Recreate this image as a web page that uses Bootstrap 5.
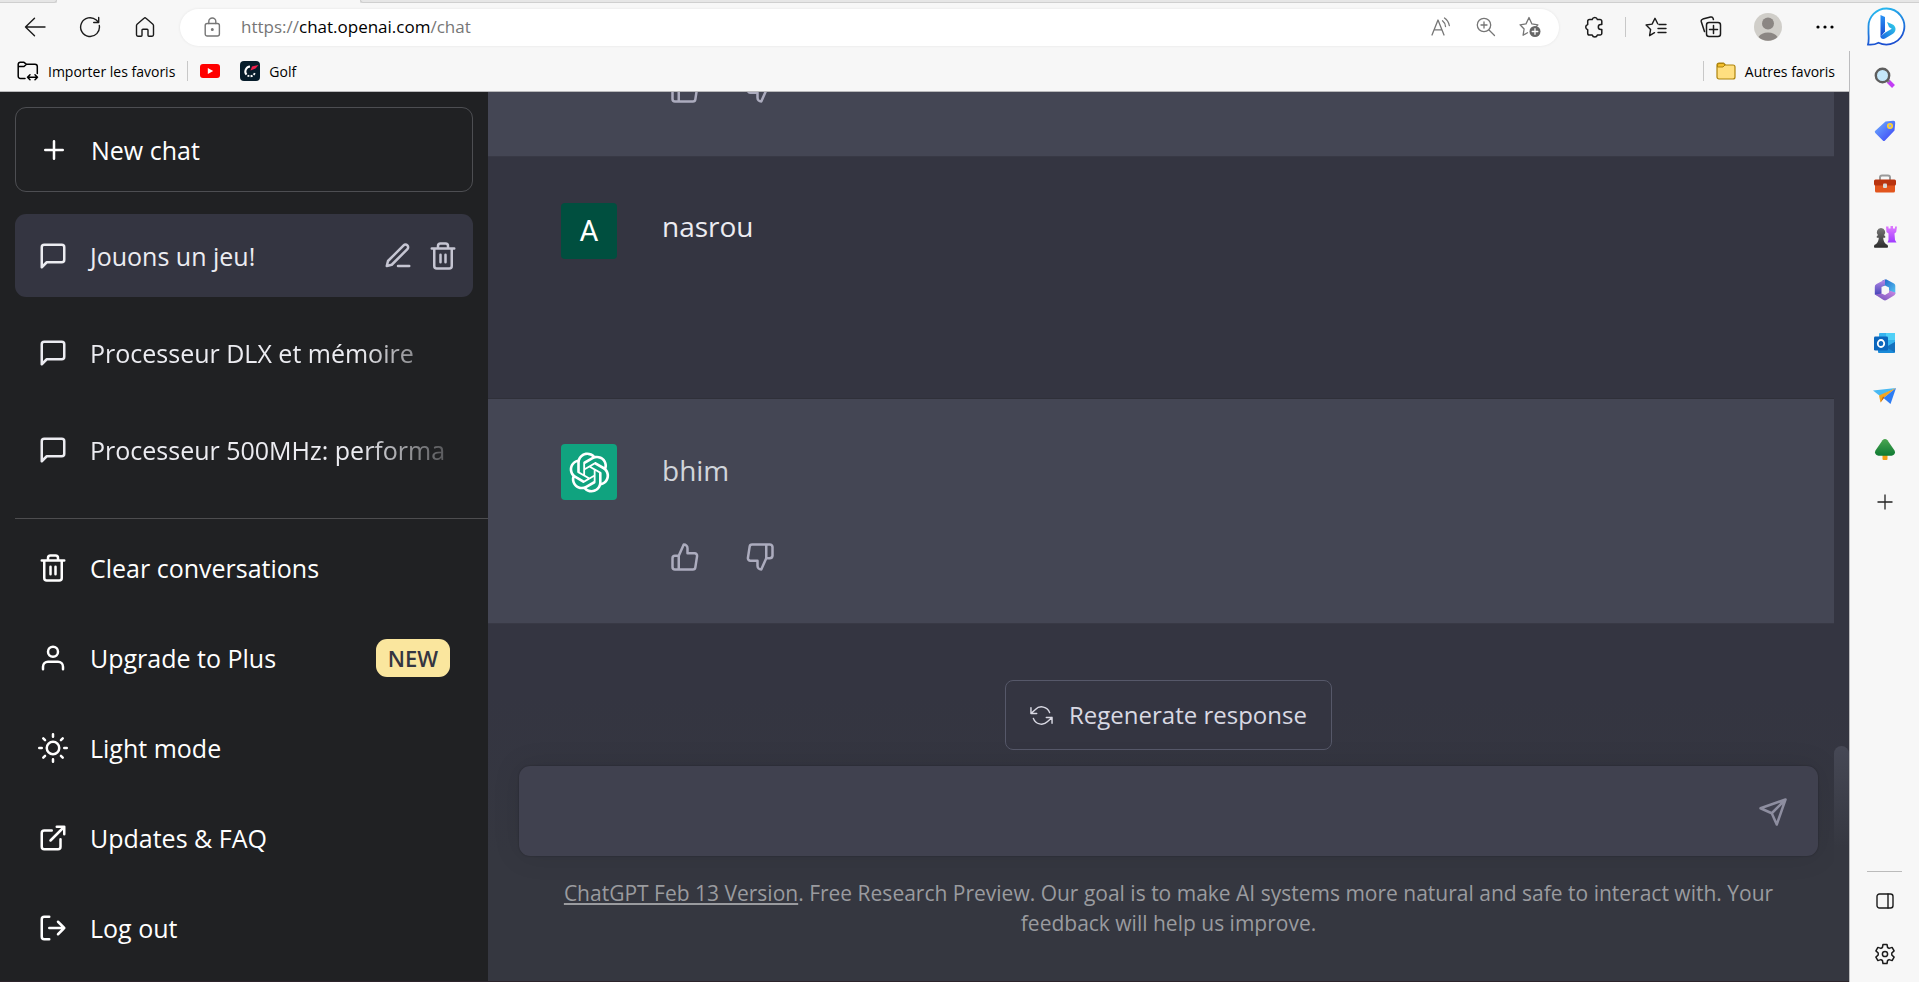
<!DOCTYPE html>
<html lang="fr">
<head>
<meta charset="utf-8">
<meta name="viewport" content="width=device-width, initial-scale=1">
<title>Jouons un jeu!</title>
<link href="https://cdn.jsdelivr.net/npm/bootstrap@5.3.0/dist/css/bootstrap.min.css" rel="stylesheet">
<style>
  body { font-family: "Open Sans", "Noto Sans", sans-serif; background: #f7f7f7; color: #1b1b1b; }
  svg { display: block; flex: none; }
  button { color: inherit; }
  .ico { fill: none; stroke: currentColor; stroke-linecap: round; stroke-linejoin: round; }
  .plain { background: none; border: 0; padding: 0; display: flex; align-items: center; justify-content: center; }

  /* browser frame */
  .tab-strip { height: 3px; background: #e6e6e6; }
  .tab-gap { width: 57px; border-bottom: 1px solid #cfcfcf; border-right: 1px solid #cfcfcf; border-bottom-right-radius: 3px; }
  .tab-open { width: 303px; background: #f7f7f7; }
  .tab-rest { border-bottom: 1px solid #cfcfcf; border-left: 1px solid #cfcfcf; border-bottom-left-radius: 3px; }
  .toolbar { height: 48px; padding-left: 7px; }
  .tool { width: 55px; height: 40px; }
  .tool-wide { width: 59px; height: 40px; }
  .tool-bing { width: 67px; height: 44px; }
  .address { height: 37px; border-radius: 19px; background: #fff; margin: 0 7px 0 8px; padding: 0 6px 0 24px; color: #767676; font-size: 17px; box-shadow: 0 0 3px rgba(0,0,0,.08); }
  .address b { font-weight: 400; color: #000; }
  .address .lock { margin-right: 20px; }
  .address .tool { width: 45px; }
  .v-line { width: 1px; height: 20px; background: #c8c8c8; }
  .tool-line { margin: 0 2px 0 4px; }
  .fav-bar { height: 41px; padding: 0 14px 0 17px; border-bottom: 1px solid #b9b9bb; font-size: 14px; }
  .fav-bar a { color: #000; text-decoration: none; display: flex; align-items: center; gap: 9px; }
  .fav-line { margin: 0 12px; }
  .side-rail { width: 70px; border-left: 1px solid #bcbcbe; padding-bottom: 2px; }
  .side-rail button { width: 100%; height: 53px; }
  .rail-line { width: 35px; height: 1px; background: #bbb; margin: 0 auto 2px; }

  /* conversation list */
  .app-view { border-bottom: 1px solid #2c242b; }
  .history { width: 488px; background: #202123; padding: 15px 0 12px 15px; color: #fff; font-size: 25px; line-height: 36px; }
  .history a, .new-chat { display: flex; align-items: center; gap: 22px; padding: 0 15px 0 23px; color: #fff; text-decoration: none; white-space: nowrap; }
  .new-chat { background: none; height: 85px; border: 1px solid #4d4e52; border-radius: 11px; margin: 0 15px 22px 0; }
  .talks { gap: 14px; margin-right: 15px; }
  .talks .talk { height: 83px; border-radius: 11px; }
  .talks a { height: 83px; color: #ececf1; }
  .talk-on { background: #343541; }
  .talk-acts { gap: 15px; padding-right: 15px; color: #c5c5d2; }
  .fade-out { -webkit-mask-image: linear-gradient(90deg, #000 270px, rgba(0,0,0,.3) 350px); mask-image: linear-gradient(90deg, #000 270px, rgba(0,0,0,.3) 350px); }
  .menu { border-top: 1px solid #4d4d4f; padding-top: 8px; gap: 8px; }
  .menu a { height: 82px; margin-right: 15px; }
  .new-tag { background: #fae69e; color: #343541; border-radius: 11px; font-weight: 600; font-size: 22px; line-height: 38px; padding: 0 12px; margin-right: 8px; }

  /* thread */
  .chat { background: #343541; }
  .turn { padding: 45px 0 45px 73px; margin-right: 15px; gap: 45px; border-bottom: 1px solid #2f3039; color: #ececf1; font-size: 28px; line-height: 52px; }
  .turn-user { min-height: 242px; padding-top: 46px; line-height: 46px; }
  .turn-bot { background: #444654; color: #d1d5db; height: 225px; border-bottom-color: #383945; }
  .face { width: 56px; height: 56px; border-radius: 4px; font-size: 29px; color: #fff; }
  .face-user { background: #004f3f; font-family: Roboto, sans-serif; }
  .face-bot { background: #10a37f; }
  .votes { gap: 30px; margin-top: 38px; color: #acacbe; }
  .votes button { width: 45px; height: 45px; }
  .composer { padding: 56px 31px 43px; background: linear-gradient(180deg, #343541 0, #343541 20%, #353740 65%); }
  .regen { height: 70px; border: 1px solid #565869; border-radius: 8px; background: #343541; color: #d9d9e3; font-size: 24px; gap: 16px; padding: 0 24px; }
  .ask { height: 90px; margin-top: 16px; border-radius: 11px; background: #40414f; box-shadow: 0 0 28px rgba(0,0,0,.1), 0 0 2px rgba(0,0,0,.3); padding: 2px 30px 0; color: #8e8ea0; }
  .ask textarea { background: none; border: 0; outline: 0; resize: none; color: #fff; font-size: 28px; line-height: 45px; }
  .note { margin: 22px 0 0; padding: 0 30px; text-align: center; color: #9a9b9f; font-size: 21px; line-height: 30px; }
  .note a { color: inherit; }
  .scroll-thumb { right: 0; bottom: 100px; width: 15px; height: 135px; border-radius: 8px 8px 0 0; background: linear-gradient(180deg, #464855, #353740 75%); }
</style>
</head>
<body class="vh-100 d-flex flex-column overflow-hidden">

<div class="tab-strip d-flex flex-shrink-0"><div class="tab-gap"></div><div class="tab-open"></div><div class="tab-rest flex-grow-1"></div></div>

<header class="toolbar d-flex align-items-center flex-shrink-0">
  <button class="plain tool" aria-label="Retour"><svg class="ico" width="22" height="20" viewBox="0 0 22 20" stroke-width="1.4"><path d="M21 10H1.5M10.5 1.2L1.5 10l9 8.8"/></svg></button>
  <button class="plain tool" aria-label="Actualiser"><svg class="ico" width="22" height="22" viewBox="0 0 22 22" stroke-width="1.4"><path d="M20.3 9.5a9.4 9.4 0 1 1-3-5.400l2.200 2.100M19.700 1.500v5h-5"/></svg></button>
  <button class="plain tool" aria-label="Accueil"><svg class="ico" width="20" height="21" viewBox="0 0 20 21" stroke-width="1.4"><path d="M1.500 8.600c0-.6.2-1 .6-1.400L9 1.300a1.500 1.500 0 0 1 2 0l6.900 5.900c.4.4.6.8.6 1.400v9.200c0 .8-.6 1.400-1.400 1.400h-3.200c-.5 0-.9-.4-.9-.9v-5.100c0-.5-.4-.9-.9-.9H7.900c-.5 0-.9.4-.9.9v5.100c0 .5-.4.9-.9.9H2.900c-.8 0-1.400-.6-1.400-1.400z"/></svg></button>
  <div class="address d-flex align-items-center flex-grow-1">
    <svg class="ico lock" width="17" height="20" viewBox="0 0 17 20" stroke-width="1.4"><rect x="1.2" y="6.5" width="14.2" height="12.5" rx="2"/><path d="M4.800 6.500V4.500a3.500 3.500 0 0 1 7 0v2"/><circle cx="8.300" cy="12.500" r=".8" fill="currentColor"/></svg>
    <span class="flex-grow-1">https://<b>chat.openai.com</b>/chat</span>
    <button class="plain tool" aria-label="Lecture à voix haute"><svg class="ico" width="20" height="20" viewBox="0 0 20 20" stroke-width="1.3"><path d="M1 18L7 3l6 15M3.200 12.800h7.600M11.500 3.800a8 8 0 0 1 3 5.700M13.500 1a11.500 11.500 0 0 1 4.800 7.500"/></svg></button>
    <button class="plain tool" aria-label="Zoom"><svg class="ico" width="20" height="20" viewBox="0 0 20 20" stroke-width="1.3"><circle cx="8" cy="8" r="6.700"/><path d="M13 13l5.500 5.500M8 5v6M5 8h6"/></svg></button>
    <button class="plain tool" aria-label="Ajouter aux favoris"><svg class="ico" width="23" height="22" viewBox="0 0 23 22" stroke-width="1.3"><path d="M8.500 16.700l-4.400 2.500 1-6.200-4-4.200 5.900-.9L10 1.500l2.900 6.400 6 .9-1.600 1.800"/><circle cx="16" cy="15.500" r="5.500" fill="#666" stroke="none"/><path d="M16 12.700v5.600M13.200 15.500h5.600" stroke="#fff"/></svg></button>
  </div>
  <button class="plain tool" aria-label="Extensions"><svg class="ico" width="20" height="22" viewBox="0 0 20 22" stroke-width="1.5"><path d="M5.500 3.500H8.200a2.700 2.700 0 0 1 5.200 0H16A1.800 1.800 0 0 1 17.800 5.300V8.500h-1a2.500 2.500 0 0 0 0 5h1v3.700A1.800 1.800 0 0 1 16 19h-2.600a2.700 2.700 0 0 1-5.200 0H5.500a1.800 1.800 0 0 1-1.800-1.800v-3.500a2.700 2.700 0 0 1 0-5.200V5.300A1.800 1.800 0 0 1 5.500 3.500z"/></svg></button>
  <div class="v-line tool-line"></div>
  <button class="plain tool" aria-label="Favoris"><svg class="ico" width="22" height="20" viewBox="0 0 22 20" stroke-width="1.4"><path d="M9.500 15.700l-4.900 3 1-6.300-4.500-4.400 6-.9L10 1.300l2.700 5.500M14 7.500h7M13 11.500h8M13 15.500h8"/></svg></button>
  <button class="plain tool" aria-label="Collections"><svg class="ico" width="22" height="22" viewBox="0 0 22 22" stroke-width="1.5"><rect x="6.500" y="6.500" width="14" height="14" rx="2.500"/><path d="M13.500 9.500v8M9.500 13.500h8M4.500 15.500L1.300 5.800a2.200 2.200 0 0 1 1.500-2.700l7.700-2a2.200 2.200 0 0 1 2.700 1.500l.2.900"/></svg></button>
  <button class="plain tool-wide" aria-label="Profil"><svg width="28" height="28" viewBox="0 0 28 28"><circle cx="14" cy="14" r="14" fill="#d0cec9"/><circle cx="14" cy="10.500" r="6" fill="#8b8683"/><path d="M4.500 24a10.500 8 0 0 1 19 0A14 14 0 0 1 4.500 24z" fill="#8b8683"/></svg></button>
  <button class="plain tool" aria-label="Paramètres et plus"><svg width="18" height="4" viewBox="0 0 18 4"><circle cx="2" cy="2" r="1.600"/><circle cx="9" cy="2" r="1.600"/><circle cx="16" cy="2" r="1.600"/></svg></button>
  <button class="plain tool-bing" aria-label="Bing"><svg width="40" height="40" viewBox="0 0 40 40"><defs><linearGradient id="bg1" x1="0" y1="0" x2=".3" y2="1"><stop offset="0" stop-color="#29c3f2"/><stop offset="1" stop-color="#1b4fd0"/></linearGradient><linearGradient id="bg2" x1="0" y1="0" x2="0" y2="1"><stop offset="0" stop-color="#2a93f5"/><stop offset="1" stop-color="#1747cf"/></linearGradient><linearGradient id="bg3" x1="1" y1="0" x2="0" y2="1"><stop offset="0" stop-color="#31d4ea"/><stop offset="1" stop-color="#1a62e0"/></linearGradient></defs><path d="M20.500 1.500a18 18 0 1 1-8 34.200c-3 1.600-6.500 2.300-10.500 1.800 1.200-4 .6-8 .5-11.500V20a18 18 0 0 1 18-18.500z" fill="#fff" stroke="url(#bg1)" stroke-width="1.8"/><path d="M14.500 8l4.500 2v14.500l-4.500 5.500z" fill="url(#bg2)"/><path d="M14.500 29.500c0 2.500 3 3 5 1.800l7.500-4.500c3.500-2.500 3.500-7.800-.8-9.600L21 15l2 5 2.800 1.700-6.800 4z" fill="url(#bg3)"/></svg></button>
</header>

<div class="d-flex flex-grow-1 overflow-hidden">
  <div class="d-flex flex-column flex-grow-1 overflow-hidden">
    <nav class="fav-bar d-flex align-items-center flex-shrink-0" aria-label="Barre des favoris">
      <a href="#"><svg class="ico" width="22" height="20" viewBox="0 0 22 20" stroke-width="1.5"><path d="M8 17.500H3.500A2.300 2.300 0 0 1 1.200 15V3.300A2 2 0 0 1 3.200 1.300H7l2.500 2H18a2.300 2.300 0 0 1 2.300 2.300v7M1.200 5.500H7l2.500-2.200M10.500 16.300h10M13 13.800l-2.500 2.500 2.500 2.500M18 13.800l2.500 2.500-2.500 2.500"/></svg>Importer les favoris</a>
      <div class="v-line fav-line"></div>
      <a href="#" aria-label="YouTube"><svg width="20" height="14" viewBox="0 0 20 14"><rect width="20" height="14" rx="3" fill="#f00"/><path d="M7.800 4l5.400 3-5.400 3z" fill="#fff"/></svg></a>
      <a href="#" class="ms-3 ps-1"><svg width="20" height="20" viewBox="0 0 20 20"><rect width="20" height="20" rx="4" fill="#071d2b"/><path d="M10 5.500a5 5 0 0 0-3.500 8.200" fill="none" stroke="#fff" stroke-width="2"/><path d="M7.500 14.500a5 5 0 0 0 7.500-3" fill="none" stroke="#fff" stroke-width="1.800" stroke-dasharray="2 1.200"/><path d="M10.500 9.500l1.500-4 6.500-1.500-3 3.500z" fill="#f01f4b"/></svg>Golf</a>
      <div class="v-line fav-line ms-auto"></div>
      <a href="#"><svg width="20" height="18" viewBox="0 0 20 18"><path d="M1 3a2 2 0 0 1 2-2h4.500l2 2H17a2 2 0 0 1 2 2v10a2 2 0 0 1-2 2H3a2 2 0 0 1-2-2z" fill="#ffdf80" stroke="#ad830a" stroke-width="1.2"/><path d="M1.500 5H7l2-2-1.700-1.500H3A1.500 1.500 0 0 0 1.500 3z" fill="#f5bf2c" stroke="#ad830a"/></svg>Autres favoris</a>
    </nav>

    <div class="app-view d-flex flex-grow-1 overflow-hidden">
      <aside class="history d-flex flex-column flex-shrink-0">
        <button class="new-chat"><svg class="ico" width="30" height="30" viewBox="0 0 24 24" stroke-width="2"><path d="M12 5v14M5 12h14"/></svg>New chat</button>
        <div class="talks d-flex flex-column flex-grow-1">
          <div class="talk talk-on d-flex align-items-center">
            <a href="#" class="flex-grow-1"><svg class="ico" width="30" height="30" viewBox="0 0 24 24" stroke-width="2"><path d="M21 15a2 2 0 0 1-2 2H7l-4 4V5a2 2 0 0 1 2-2h14a2 2 0 0 1 2 2z"/></svg>Jouons un jeu!</a>
            <div class="talk-acts d-flex">
              <button class="plain" aria-label="Rename"><svg class="ico" width="30" height="30" viewBox="0 0 24 24" stroke-width="2"><path d="M12 20h9M16.500 3.500a2.121 2.121 0 0 1 3 3L7 19l-4 1 1-4z"/></svg></button>
              <button class="plain" aria-label="Delete"><svg class="ico" width="30" height="30" viewBox="0 0 24 24" stroke-width="2"><path d="M3 6h18M19 6v14a2 2 0 0 1-2 2H7a2 2 0 0 1-2-2V6m3 0V4a2 2 0 0 1 2-2h4a2 2 0 0 1 2 2v2M10 11v6M14 11v6"/></svg></button>
            </div>
          </div>
          <a href="#" class="talk"><svg class="ico" width="30" height="30" viewBox="0 0 24 24" stroke-width="2"><path d="M21 15a2 2 0 0 1-2 2H7l-4 4V5a2 2 0 0 1 2-2h14a2 2 0 0 1 2 2z"/></svg><span class="fade-out">Processeur DLX et mémoire</span></a>
          <a href="#" class="talk"><svg class="ico" width="30" height="30" viewBox="0 0 24 24" stroke-width="2"><path d="M21 15a2 2 0 0 1-2 2H7l-4 4V5a2 2 0 0 1 2-2h14a2 2 0 0 1 2 2z"/></svg><span class="fade-out">Processeur 500MHz: performa</span></a>
        </div>
        <nav class="menu d-flex flex-column" aria-label="Menu">
          <a href="#"><svg class="ico" width="30" height="30" viewBox="0 0 24 24" stroke-width="2"><path d="M3 6h18M19 6v14a2 2 0 0 1-2 2H7a2 2 0 0 1-2-2V6m3 0V4a2 2 0 0 1 2-2h4a2 2 0 0 1 2 2v2M10 11v6M14 11v6"/></svg>Clear conversations</a>
          <a href="#"><svg class="ico" width="30" height="30" viewBox="0 0 24 24" stroke-width="2"><path d="M20 21v-2a4 4 0 0 0-4-4H8a4 4 0 0 0-4 4v2"/><circle cx="12" cy="7" r="4"/></svg>Upgrade to Plus<span class="new-tag ms-auto">NEW</span></a>
          <a href="#"><svg class="ico" width="30" height="30" viewBox="0 0 24 24" stroke-width="2"><circle cx="12" cy="12" r="5"/><path d="M12 1v2M12 21v2M4.220 4.220l1.420 1.420M18.360 18.360l1.420 1.420M1 12h2M21 12h2M4.220 19.780l1.420-1.420M18.360 5.640l1.420-1.420"/></svg>Light mode</a>
          <a href="#"><svg class="ico" width="30" height="30" viewBox="0 0 24 24" stroke-width="2"><path d="M18 13v6a2 2 0 0 1-2 2H5a2 2 0 0 1-2-2V8a2 2 0 0 1 2-2h6M15 3h6v6M10 14L21 3"/></svg>Updates &amp; FAQ</a>
          <a href="#"><svg class="ico" width="30" height="30" viewBox="0 0 24 24" stroke-width="2"><path d="M9 21H5a2 2 0 0 1-2-2V5a2 2 0 0 1 2-2h4M16 17l5-5-5-5M21 12H9"/></svg>Log out</a>
        </nav>
      </aside>

      <main class="chat d-flex flex-column flex-grow-1 position-relative overflow-hidden">
        <div class="flex-grow-1 d-flex flex-column justify-content-end overflow-hidden">
          <div class="turn turn-bot d-flex align-items-end flex-shrink-0">
            <div class="face"></div>
            <div class="votes d-flex">
              <button class="plain" aria-label="Good response"><svg class="ico" width="30" height="30" viewBox="0 0 24 24" stroke-width="2"><path d="M14 9V5a3 3 0 0 0-3-3l-4 9v11h11.280a2 2 0 0 0 2-1.700l1.380-9a2 2 0 0 0-2-2.300zM7 22H4a2 2 0 0 1-2-2v-7a2 2 0 0 1 2-2h3"/></svg></button>
              <button class="plain" aria-label="Bad response"><svg class="ico" width="30" height="30" viewBox="0 0 24 24" stroke-width="2"><path d="M10 15v4a3 3 0 0 0 3 3l4-9V2H5.720a2 2 0 0 0-2 1.700l-1.380 9a2 2 0 0 0 2 2.300zm7-13h2.670A2.310 2.310 0 0 1 22 4v7a2.310 2.310 0 0 1-2.330 2H17"/></svg></button>
            </div>
          </div>
          <div class="turn turn-user d-flex align-items-start flex-shrink-0">
            <div class="face face-user d-flex align-items-center justify-content-center">A</div>
            <div>nasrou</div>
          </div>
          <div class="turn turn-bot d-flex align-items-start flex-shrink-0">
            <div class="face face-bot d-flex align-items-center justify-content-center"><svg width="41" height="41" viewBox="0 0 41 41" fill="#fff"><path d="M37.5324 16.8707C37.9808 15.5241 38.1363 14.0974 37.9886 12.6859C37.8409 11.2744 37.3934 9.91076 36.676 8.68622C35.6126 6.83404 33.9882 5.3676 32.0373 4.4985C30.0864 3.62941 27.9098 3.40259 25.8215 3.85078C24.8796 2.7893 23.7219 1.94125 22.4257 1.36341C21.1295 0.785575 19.7249 0.491269 18.3058 0.500197C16.1708 0.495044 14.0893 1.16803 12.3614 2.42214C10.6335 3.67624 9.34853 5.44666 8.6917 7.47815C7.30085 7.76286 5.98686 8.3414 4.8377 9.17505C3.68854 10.0087 2.73073 11.0782 2.02839 12.312C0.956464 14.1591 0.498905 16.2988 0.721698 18.4228C0.944492 20.5467 1.83612 22.5449 3.268 24.1293C2.81966 25.4759 2.66413 26.9026 2.81182 28.3141C2.95951 29.7256 3.40701 31.0892 4.12437 32.3138C5.18791 34.1659 6.8123 35.6322 8.76321 36.5013C10.7141 37.3704 12.8907 37.5973 14.9789 37.1492C15.9208 38.2107 17.0786 39.0587 18.3747 39.6366C19.6709 40.2144 21.0755 40.5087 22.4946 40.4998C24.6307 40.5054 26.7133 39.8321 28.4418 38.5772C30.1704 37.3223 31.4556 35.5506 32.1119 33.5179C33.5027 33.2332 34.8167 32.6547 35.9659 31.821C37.115 30.9874 38.0728 29.9178 38.7752 28.684C39.8458 26.8371 40.3023 24.6979 40.0789 22.5748C39.8556 20.4517 38.9639 18.4544 37.5324 16.8707ZM22.4978 37.8849C20.7443 37.8874 19.0459 37.2733 17.6994 36.1501C17.7601 36.117 17.8666 36.0586 17.936 36.0161L25.9004 31.4156C26.1003 31.3019 26.2663 31.137 26.3813 30.9378C26.4964 30.7386 26.5563 30.5124 26.5549 30.2825V19.0542L29.9213 20.998C29.9389 21.0068 29.9541 21.0198 29.9656 21.0359C29.977 21.052 29.9842 21.0707 29.9867 21.0902V30.3889C29.9842 32.375 29.1946 34.2791 27.7909 35.6841C26.3872 37.0892 24.4838 37.8806 22.4978 37.8849ZM6.39227 31.0064C5.51397 29.4888 5.19742 27.7107 5.49804 25.9832C5.55718 26.0187 5.66048 26.0818 5.73461 26.1244L13.699 30.7248C13.8975 30.8408 14.1233 30.902 14.3532 30.902C14.583 30.902 14.8088 30.8408 15.0073 30.7248L24.731 25.1103V28.9979C24.7321 29.0177 24.7283 29.0376 24.7199 29.0556C24.7115 29.0736 24.6988 29.0893 24.6829 29.1012L16.6317 33.7497C14.9096 34.7416 12.8643 35.0097 10.9447 34.4954C9.02506 33.9811 7.38785 32.7263 6.39227 31.0064ZM4.29707 13.6194C5.17156 12.0998 6.55279 10.9364 8.19885 10.3327C8.19885 10.4013 8.19491 10.5228 8.19491 10.6071V19.808C8.19351 20.0378 8.25334 20.2638 8.36823 20.4629C8.48312 20.6619 8.64893 20.8267 8.84863 20.9404L18.5723 26.5542L15.206 28.4979C15.1894 28.5089 15.1703 28.5155 15.1505 28.5173C15.1307 28.5191 15.1107 28.516 15.0924 28.5082L7.04046 23.8557C5.32135 22.8601 4.06716 21.2235 3.55289 19.3046C3.03862 17.3858 3.30624 15.3413 4.29707 13.6194ZM31.955 20.0556L22.2312 14.4411L25.5976 12.4981C25.6142 12.4872 25.6333 12.4805 25.6531 12.4787C25.6729 12.4769 25.6928 12.4801 25.7111 12.4879L33.7631 17.1364C34.9967 17.849 36.0017 18.8982 36.6606 20.1613C37.3194 21.4244 37.6047 22.849 37.4832 24.2684C37.3617 25.6878 36.8382 27.0432 35.9743 28.1759C35.1103 29.3086 33.9415 30.1717 32.6047 30.6641C32.6047 30.5947 32.6047 30.4733 32.6047 30.3889V21.188C32.6066 20.9586 32.5474 20.7328 32.4332 20.5338C32.319 20.3348 32.154 20.1698 31.955 20.0556ZM35.3055 15.0128C35.2464 14.9765 35.1431 14.9142 35.069 14.8717L27.1045 10.2712C26.906 10.1554 26.6803 10.0943 26.4504 10.0943C26.2206 10.0943 25.9948 10.1554 25.7963 10.2712L16.0726 15.8858V11.9982C16.0715 11.9783 16.0753 11.9585 16.0837 11.9405C16.0921 11.9225 16.1048 11.9068 16.1207 11.8949L24.1719 7.25025C25.4053 6.53903 26.8158 6.19376 28.2383 6.25482C29.6608 6.31589 31.0364 6.78077 32.2044 7.59508C33.3723 8.40939 34.2842 9.53945 34.8334 10.8531C35.3826 12.1667 35.5464 13.6095 35.3055 15.0128ZM14.2424 21.9419L10.8752 19.9981C10.8576 19.9893 10.8423 19.9763 10.8309 19.9602C10.8195 19.9441 10.8122 19.9254 10.8098 19.9058V10.6071C10.8107 9.18295 11.2173 7.78848 11.9819 6.58696C12.7466 5.38544 13.8377 4.42659 15.1275 3.82264C16.4173 3.21869 17.8524 2.99464 19.2649 3.1767C20.6775 3.35876 22.0089 3.93941 23.1034 4.85067C23.0427 4.88379 22.937 4.94215 22.8668 4.98473L14.9024 9.58517C14.7025 9.69878 14.5366 9.86356 14.4215 10.0626C14.3065 10.2616 14.2466 10.4877 14.2479 10.7175L14.2424 21.9419ZM16.071 17.9991L20.4018 15.4978L24.7325 17.9975V22.9985L20.4018 25.4983L16.071 22.9985V17.9991Z"/></svg></div>
            <div>
              <div>bhim</div>
              <div class="votes d-flex">
                <button class="plain" aria-label="Good response"><svg class="ico" width="30" height="30" viewBox="0 0 24 24" stroke-width="2"><path d="M14 9V5a3 3 0 0 0-3-3l-4 9v11h11.280a2 2 0 0 0 2-1.700l1.380-9a2 2 0 0 0-2-2.300zM7 22H4a2 2 0 0 1-2-2v-7a2 2 0 0 1 2-2h3"/></svg></button>
                <button class="plain" aria-label="Bad response"><svg class="ico" width="30" height="30" viewBox="0 0 24 24" stroke-width="2"><path d="M10 15v4a3 3 0 0 0 3 3l4-9V2H5.720a2 2 0 0 0-2 1.700l-1.380 9a2 2 0 0 0 2 2.300zm7-13h2.670A2.310 2.310 0 0 1 22 4v7a2.310 2.310 0 0 1-2.330 2H17"/></svg></button>
              </div>
            </div>
          </div>
        </div>

        <form class="composer">
          <button type="button" class="regen d-flex align-items-center mx-auto"><svg class="ico" width="23" height="23" viewBox="0 0 24 24" stroke-width="1.5"><path d="M1 4v6h6M23 20v-6h-6M20.490 9A9 9 0 0 0 5.640 5.640L1 10m22 4l-4.640 4.360A9 9 0 0 1 3.510 15"/></svg>Regenerate response</button>
          <div class="ask d-flex align-items-center">
            <textarea class="flex-grow-1" rows="1" aria-label="Message"></textarea>
            <button class="plain" aria-label="Send"><svg class="ico" width="30" height="30" viewBox="0 0 24 24" stroke-width="2"><path d="M22 2L2 9l9 4zM22 2l-7 20-4-9z"/></svg></button>
          </div>
          <p class="note"><a href="#">ChatGPT Feb 13 Version</a>. Free Research Preview. Our goal is to make AI systems more natural and safe to interact with. Your feedback will help us improve.</p>
        </form>
        <div class="scroll-thumb position-absolute"></div>
      </main>
    </div>
  </div>

  <aside class="side-rail d-flex flex-column flex-shrink-0">
    <svg width="0" height="0" class="position-absolute"><defs>
      <linearGradient id="r1" x1="0" y1="0" x2="1" y2="1"><stop offset="0" stop-color="#6fb4ff"/><stop offset="1" stop-color="#3a3df5"/></linearGradient>
      <linearGradient id="r2" x1="0" y1="0" x2="0" y2="1"><stop offset="0" stop-color="#e07bff"/><stop offset="1" stop-color="#a03cff"/></linearGradient>
      <linearGradient id="r3" x1="0" y1="0" x2="0" y2="1"><stop offset="0" stop-color="#777"/><stop offset="1" stop-color="#2c2c2c"/></linearGradient>
      <linearGradient id="r4" x1="0" y1="0" x2="0" y2="1"><stop offset="0" stop-color="#4aa551"/><stop offset="1" stop-color="#0f7a33"/></linearGradient>
      <linearGradient id="r5" x1="0" y1="0" x2="0" y2="1"><stop offset="0" stop-color="#b98be8"/><stop offset="1" stop-color="#3b3fb5"/></linearGradient>
      <linearGradient id="r6" x1="0" y1="0" x2="1" y2="1"><stop offset="0" stop-color="#1d5fc4"/><stop offset="1" stop-color="#58c8f5"/></linearGradient>
      <linearGradient id="r7" x1="0" y1="1" x2="1" y2="0"><stop offset="0" stop-color="#6a4fb8"/><stop offset="1" stop-color="#cf8ae6"/></linearGradient>
    </defs></svg>
    <button class="plain" aria-label="Rechercher"><svg width="22" height="22" viewBox="0 0 22 22"><path d="M14 14l5.500 5.500" stroke="#c23cf5" stroke-width="4"/><path d="M12.500 12.500l2.500 2.500" stroke="#888" stroke-width="2.500"/><circle cx="8.500" cy="8.500" r="6.700" fill="#c5e8fb" stroke="#5e5e5e" stroke-width="2.400"/></svg></button>
    <button class="plain" aria-label="Achats"><svg width="22" height="22" viewBox="0 0 22 22"><path d="M11.500 1.500L19 .8A2 2 0 0 1 21.200 3l-.7 7.500L11 20.500a1.500 1.500 0 0 1-2.200 0L1.300 13a1.500 1.500 0 0 1 0-2.200z" fill="url(#r1)"/><circle cx="16" cy="6" r="2.200" fill="#8fa3ff" stroke="#ffd12b" stroke-width="1.700"/></svg></button>
    <button class="plain" aria-label="Outils"><svg width="24" height="20" viewBox="0 0 24 20"><path d="M7 6V3.500a2 2 0 0 1 2-2h6a2 2 0 0 1 2 2V6" fill="none" stroke="#9a9a9a" stroke-width="2"/><rect x="2" y="9" width="20" height="9.500" rx="1.500" fill="#e2551d"/><rect x="1" y="5.500" width="22" height="6" rx="1.500" fill="#b9340f"/><rect x="10" y="9.500" width="4" height="4.500" rx="1" fill="#d9d9d9"/></svg></button>
    <button class="plain" aria-label="Jeux"><svg width="24" height="24" viewBox="0 0 24 24"><path d="M13 1.500h2.500v2h2V1h2.500v2.500h2v-2H24L23.200 7l-1.700 1.500.5 6.500 1.500 2.500h-9L15.500 15V8.500L13.500 7z" fill="url(#r2)"/><path d="M8 3a4.300 4.300 0 0 1 3 7.300l1.200.7v1.700h-2c.2 3 1 4.800 3 6.500 1.200.3 1.800 1 1.800 2.300 0 .8-.4 1.300-1.200 1.300H2.200C1.400 22.800 1 22.300 1 21.500c0-1.300.6-2 1.800-2.300 2-1.700 2.800-3.500 3-6.500h-2V11l1.200-.7A4.300 4.300 0 0 1 8 3z" fill="url(#r3)"/></svg></button>
    <button class="plain" aria-label="Microsoft 365"><svg width="22" height="22" viewBox="0 0 22 22"><path d="M8.500 1.500l3.500-1.300 8 4.300a2.500 2.500 0 0 1 1.300 2.200V15L15 11.500V8.500l-4-2-2.500 1z" fill="url(#r6)"/><path d="M11 .5L2.500 5A3 3 0 0 0 .8 8v7.500l4 1.500 2.700-2.500V8l3.500-2z" fill="url(#r5)"/><path d="M1 15.500l8.500 5.600a3 3 0 0 0 3 0l7.500-4.600c1-.7 1.500-1.500 1.300-3L15 11.500v2l-4 2.500-3.500-1.500z" fill="url(#r7)"/></svg></button>
    <button class="plain" aria-label="Outlook"><svg width="22" height="22" viewBox="0 0 22 22"><rect x="5" y="1" width="16" height="14" rx="1" fill="#37b4ef"/><path d="M12 1h9v7h-9z" fill="#50d0f7"/><path d="M4 11l9 4 8-5v10a1 1 0 0 1-1 1H5a1 1 0 0 1-1-1z" fill="#1a8ad8"/><path d="M12 15l9 5.500V10z" fill="#1570bd"/><rect x="0" y="4.500" width="14" height="14" rx="1.200" fill="#0b66bd"/><ellipse cx="7" cy="11.500" rx="3.200" ry="3.500" fill="none" stroke="#fff" stroke-width="1.800"/></svg></button>
    <button class="plain" aria-label="Drop"><svg width="24" height="18" viewBox="0 0 24 18"><path d="M0 3.500L23 1 7 9z" fill="#49b9f2"/><path d="M23 1L6 8.500l1.500 7 3-4.500z" fill="#f3a51f"/><path d="M7.500 15.500l4-5-1.500-1z" fill="#c2620c"/><path d="M23 1L10.500 11l7 6z" fill="#2d7cf3"/></svg></button>
    <button class="plain" aria-label="Arbre"><svg width="22" height="22" viewBox="0 0 22 22"><rect x="8.500" y="14" width="5" height="8" rx="1" fill="#f5a014"/><path d="M8.500 2.200a3.500 3.500 0 0 1 5 0l7 10.300c1.200 2.300 0 5-3 5.200h-13c-3-.2-4.200-2.900-3-5.200z" fill="url(#r4)"/></svg></button>
    <button class="plain" aria-label="Ajouter"><svg width="16" height="16" viewBox="0 0 16 16" stroke="#222" stroke-width="1.300"><path d="M8 .5v15M.5 8h15"/></svg></button>
    <div class="rail-line mt-auto"></div>
    <button class="plain" aria-label="Masquer la barre"><svg class="ico" width="18" height="16" viewBox="0 0 18 16" stroke-width="1.400"><rect x="1" y="1" width="16" height="14" rx="2.500"/><path d="M12 1v14"/></svg></button>
    <button class="plain" aria-label="Paramètres"><svg class="ico" width="22" height="22" viewBox="0 0 22 22" stroke-width="1.500"><path d="M9 1.500h4l.6 3 1.500.9 3-1 2 3.500-2.300 2.100v2l2.300 2.100-2 3.500-3-1-1.500.9-.6 3H9l-.6-3-1.500-.9-3 1-2-3.500 2.300-2.100v-2L1.900 7.900l2-3.500 3 1 1.500-.9z"/><circle cx="11" cy="11" r="2.600"/></svg></button>
  </aside>
</div>
<script src="https://cdn.jsdelivr.net/npm/bootstrap@5.3.0/dist/js/bootstrap.bundle.min.js"></script>
</body>
</html>
